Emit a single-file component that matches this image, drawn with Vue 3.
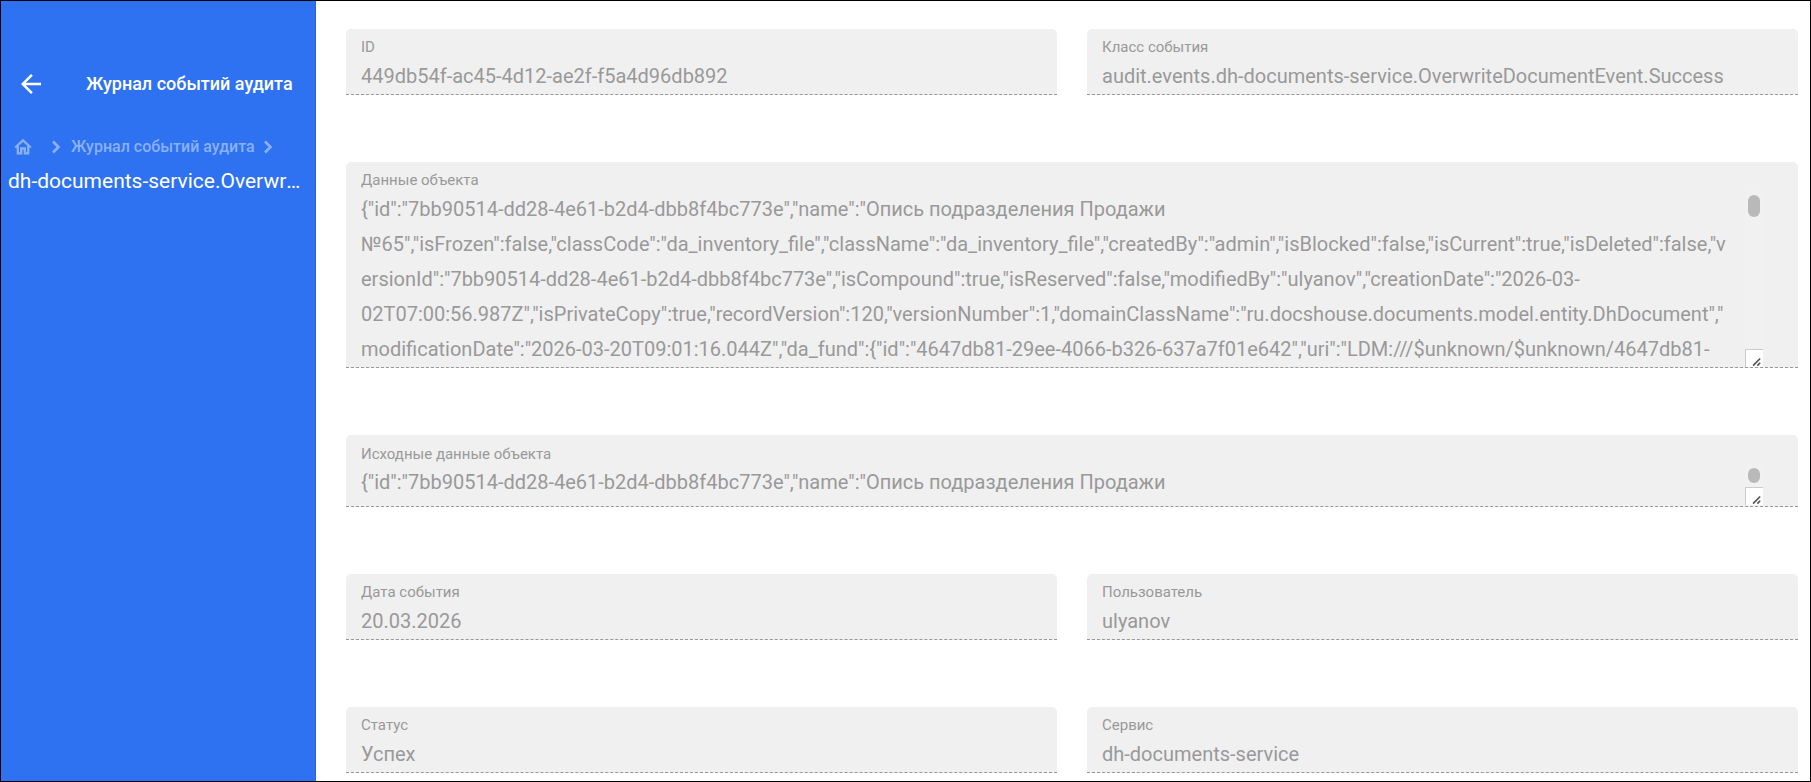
<script setup>
const objectData = '{"id":"7bb90514-dd28-4e61-b2d4-dbb8f4bc773e","name":"Опись подразделения Продажи №65","isFrozen":false,"classCode":"da_inventory_file","className":"da_inventory_file","createdBy":"admin","isBlocked":false,"isCurrent":true,"isDeleted":false,"versionId":"7bb90514-dd28-4e61-b2d4-dbb8f4bc773e","isCompound":true,"isReserved":false,"modifiedBy":"ulyanov","creationDate":"2026-03-02T07:00:56.987Z","isPrivateCopy":true,"recordVersion":120,"versionNumber":1,"domainClassName":"ru.docshouse.documents.model.entity.DhDocument","modificationDate":"2026-03-20T09:01:16.044Z","da_fund":{"id":"4647db81-29ee-4066-b326-637a7f01e642","uri":"LDM:///$unknown/$unknown/4647db81-'
const sourceData = '{"id":"7bb90514-dd28-4e61-b2d4-dbb8f4bc773e","name":"Опись подразделения Продажи'

const fields = [
  { id: 'event-id', label: 'ID', value: '449db54f-ac45-4d12-ae2f-f5a4d96db892' },
  { id: 'event-class', label: 'Класс события', value: 'audit.events.dh-documents-service.OverwriteDocumentEvent.Success' },
  { id: 'object-data', label: 'Данные объекта', value: objectData, area: 'tall' },
  { id: 'source-data', label: 'Исходные данные объекта', value: sourceData, area: 'short' },
  { id: 'event-date', label: 'Дата события', value: '20.03.2026' },
  { id: 'user', label: 'Пользователь', value: 'ulyanov' },
  { id: 'status', label: 'Статус', value: 'Успех' },
  { id: 'service', label: 'Сервис', value: 'dh-documents-service' },
]
</script>

<template>
  <div class="page">
    <aside class="sidebar">
      <header class="head">
        <button class="back" type="button" aria-label="Назад">
          <svg viewBox="0 0 24 24" width="30" height="30" fill="currentColor">
            <path d="M20 11H7.83l5.59-5.59L12 4l-8 8 8 8 1.41-1.41L7.83 13H20v-2z" />
          </svg>
        </button>
        <h1 class="title">Журнал событий аудита</h1>
      </header>
      <nav class="crumbs">
        <a class="home" href="#" aria-label="Главная">
          <svg viewBox="0 0 20 20" width="20" height="20" fill="none" stroke="currentColor" stroke-width="2.300">
            <path d="M2.200 10.500 10 3.300l7.800 7.200" />
            <path d="M4.800 9v7.300h3.400v-4.800h3.600v4.800h3.400V9" />
          </svg>
        </a>
        <svg class="chevron" viewBox="0 0 10 14" width="10" height="14">
          <path d="M2 1.500 7.500 7 2 12.500" fill="none" stroke="currentColor" stroke-width="2.600" />
        </svg>
        <a class="crumb" href="#">Журнал событий аудита</a>
        <svg class="chevron" viewBox="0 0 10 14" width="10" height="14">
          <path d="M2 1.500 7.500 7 2 12.500" fill="none" stroke="currentColor" stroke-width="2.600" />
        </svg>
      </nav>
      <p class="current">dh-documents-service.OverwriteDocumentEvent</p>
    </aside>

    <main class="form">
      <div v-for="f in fields" :key="f.id" class="field" :class="f.area && ['wide', f.area]">
        <label class="label" :for="f.id">{{ f.label }}</label>
        <div v-if="f.area" class="area">
          <textarea :id="f.id" class="value text" :value="f.value" disabled></textarea>
          <div class="scroll">
            <span class="thumb"></span>
            <svg class="grip" viewBox="0 0 18 18" width="18" height="18">
              <path d="M7.500 16.500 15 9M12 16.500l3-3" fill="none" stroke="#555" stroke-width="1.800" />
            </svg>
          </div>
        </div>
        <input v-else :id="f.id" class="value line" type="text" :value="f.value" disabled />
      </div>
    </main>
  </div>
</template>

<style>
body {
  margin: 0;
}
</style>

<style scoped>
.page {
  box-sizing: border-box;
  display: grid;
  grid-template-columns: 315px 1fr;
  min-height: 100vh;
  border: 1px solid #000;
  background: #fff;
  font-family: Roboto, "Noto Sans", sans-serif;
}

.sidebar {
  box-sizing: border-box;
  min-width: 0;
  padding: 67px 14px 0 7px;
  border-right: 1px solid #2a65d8;
  background: #2f72f1;
  color: #fff;
}

.head {
  display: flex;
  align-items: center;
  height: 32px;
  padding-left: 8px;
}

.back {
  display: flex;
  padding: 0;
  border: 0;
  background: none;
  color: inherit;
}

.title {
  margin: 0 0 0 40px;
  font-size: 18px;
  font-weight: 500;
  line-height: 24px;
  white-space: nowrap;
}

.crumbs {
  display: flex;
  align-items: center;
  height: 24px;
  margin-top: 35px;
  padding-left: 5px;
  color: #8ab1f8;
}

.home {
  display: flex;
  margin-right: 18px;
  color: inherit;
}

.crumb {
  margin: 0 8px 0 10px;
  color: inherit;
  font-size: 16px;
  font-weight: 500;
  line-height: 24px;
  text-decoration: none;
  white-space: nowrap;
}

.current {
  margin: 8px 0 0;
  overflow: hidden;
  font-size: 21px;
  line-height: 28px;
  text-overflow: ellipsis;
  white-space: nowrap;
}

.form {
  display: grid;
  grid-template-columns: 1fr 1fr;
  align-content: start;
  gap: 67px 30px;
  min-width: 0;
  padding: 28px 12px 7px 30px;
}

.field {
  display: flex;
  flex-direction: column;
  box-sizing: border-box;
  min-width: 0;
  height: 66px;
  padding: 8px 15px 0;
  border-bottom: 1px dashed #999;
  border-radius: 5px 5px 0 0;
  background: #f0f0f0;
}

.wide {
  grid-column: 1 / -1;
  padding-right: 35px;
}

.tall {
  height: 206px;
}

.short {
  height: 72px;
  padding-top: 9px;
  padding-bottom: 1px;
}

.label {
  flex: none;
  color: #999;
  font-size: 15px;
  line-height: 20px;
}

.value {
  box-sizing: border-box;
  min-width: 0;
  margin: 0;
  padding: 0;
  border: 0;
  background: none;
  color: #999;
  font-family: inherit;
  font-size: 20px;
}

.line {
  width: 100%;
  height: 28px;
  margin-top: 5px;
}

.area {
  display: flex;
  flex: 1;
  min-height: 0;
  margin-top: 1px;
}

.text {
  flex: 1;
  height: 100%;
  padding: 1px 18px 0 0;
  overflow: hidden;
  line-height: 35px;
  overflow-wrap: break-word;
  resize: none;
}

.short .text {
  padding-top: 0;
}

.scroll {
  display: flex;
  flex: none;
  flex-direction: column;
  align-items: center;
  justify-content: space-between;
  width: 18px;
  background: #f1f1f1;
}

.thumb {
  width: 12px;
  height: 22px;
  margin-top: 4px;
  border-radius: 6px;
  background: #b9b9b9;
}

.short .thumb {
  height: 15px;
  margin-top: 3px;
}

.grip {
  flex: none;
  box-sizing: border-box;
  border-top: 1px solid #ccc;
  border-left: 1px solid #ccc;
  background: #fff;
}
</style>
